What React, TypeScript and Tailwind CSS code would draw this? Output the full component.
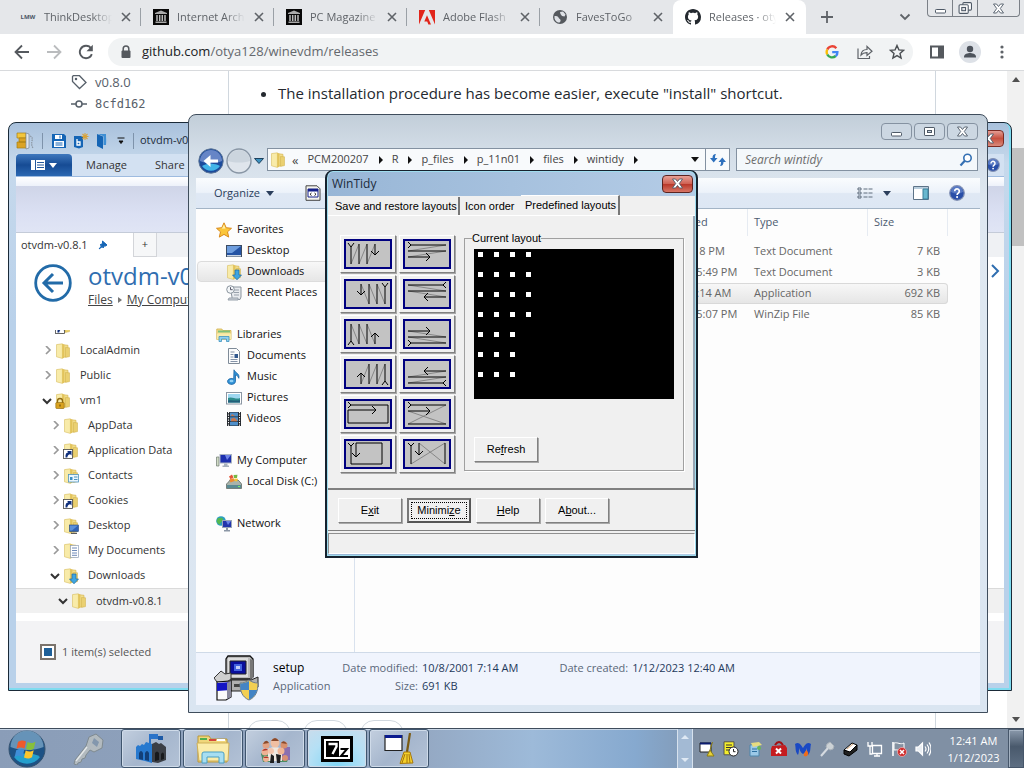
import type { ReactNode } from 'react';

type IconProps = { className?: string };

/* ---------- shared icons ---------- */

function Folder({ className = 'size-4', children }: IconProps & { children?: ReactNode }) {
  return (
    <svg viewBox="0 0 16 16" className={`${className} shrink-0`}>
      <path d="M7 1.500l6 .8v11l-6 1.200z" fill="#f0dc8a" stroke="#d3b24c" strokeWidth=".6" />
      <path d="M10.500 4.500l4 .3v8.800l-4 .8z" fill="#ead071" stroke="#cfae47" strokeWidth=".5" />
      <path d="M1.500 1.600L7.400.8v14.600l-5.900-1.600z" fill="#f8eba9" stroke="#d9bd5f" strokeWidth=".6" />
      <path d="M7.400.8l2 1v13l-2 .6z" fill="#e3c45a" />
      {children}
    </svg>
  );
}

const ShortcutBadge = () => (
  <g>
    <rect x=".5" y="6.500" width="9" height="9" fill="#fff" stroke="#444" strokeWidth=".8" />
    <path d="M2.500 14.500c-.3-3.500 1-5 2.800-5.200L4 8h4.500v4.500L7.200 11.200C5.500 11.400 4.500 12.300 4.300 14.500z" fill="#0f2f7c" />
  </g>
);
const DownBadge = () => <path d="M9 6h4v5h2.500L11 15.800 6.500 11H9z" fill="#3fa5e0" stroke="#1b6ba5" strokeWidth=".7" />;
const LockBadge = () => (
  <g>
    <path d="M2.500 10V8a2.500 2.500 0 015 0v2" fill="none" stroke="#8f6a10" strokeWidth="1.300" />
    <rect x=".8" y="9.500" width="8.400" height="6" rx=".8" fill="#d9a21f" stroke="#8f6a10" strokeWidth=".6" />
    <path d="M5 11.500v2" stroke="#5a4208" />
  </g>
);
const CardBadge = () => (
  <g>
    <rect x="5.500" y="6.500" width="10" height="7.500" fill="#eaf6fd" stroke="#4f94bd" strokeWidth=".8" />
    <path d="M7 9h2.500v3H7z" fill="#3c8ec4" />
    <path d="M11 9h3.500M11 11.500h3.500" stroke="#4f94bd" />
  </g>
);
const ScreenBadge = () => (
  <g>
    <rect x="6.500" y="7" width="9" height="6.500" fill="#2f62b5" stroke="#26487c" strokeWidth=".6" />
    <path d="M7 7.500h8l-6 5H7z" fill="#5b8fd8" />
    <path d="M8 15.300h6" stroke="#333" />
  </g>
);
const PageBadge = () => (
  <g>
    <rect x="7.500" y="2.500" width="8" height="12" fill="#fff" stroke="#8fa0b8" strokeWidth=".7" />
    <path d="M9 5h5M9 7.500h5M9 10h5M9 12.300h5" stroke="#5d7db0" strokeWidth=".9" />
  </g>
);

function CrossIcon({ className = 'size-2.5' }: IconProps) {
  return (
    <svg viewBox="0 0 10 10" className={`${className} shrink-0`}>
      <path d="M1 1l8 8M9 1L1 9" stroke="currentColor" strokeWidth="1.600" />
    </svg>
  );
}

/* outlined white caption glyph, as on Aero windows */
function CaptionGlyph({ kind, className = 'h-[11px] w-[13px]' }: IconProps & { kind: 'min' | 'max' | 'restore' | 'close' }) {
  return (
    <svg viewBox="0 0 13 11" className={className} fill="#fff" stroke="#4e5966" strokeWidth="1">
      {kind === 'min' && <rect x="1.500" y="6.500" width="10" height="3.500" rx=".8" />}
      {kind === 'max' && (
        <g>
          <rect x="1.500" y="1.500" width="10" height="8" rx=".6" />
          <rect x="4.500" y="4.500" width="4" height="2" fill="#c8d4e0" />
        </g>
      )}
      {kind === 'restore' && (
        <g>
          <rect x="4.500" y=".5" width="8" height="7" rx="1" />
          <rect x="1" y="2.500" width="8.500" height="8" rx="1" />
          <rect x="3.500" y="5" width="3.500" height="3" fill="#dee1e6" />
        </g>
      )}
      {kind === 'close' && (
        <path d="M1.500 1h3l2 2.500L8.500 1h3L8.300 5.500l3.200 4.500h-3L6.500 7.500l-2 2.500h-3l3.200-4.500z" strokeWidth=".9" />
      )}
    </svg>
  );
}

function HelpBadge({ className = 'size-4' }: IconProps) {
  return (
    <svg viewBox="0 0 16 16" className={className}>
      <circle cx="8" cy="8" r="7.300" fill="#2a4fa8" stroke="#8593b5" strokeWidth="1.200" />
      <path d="M2 7a6 6 0 0112 0c-4 2-8 2-12 0z" fill="#7795d6" opacity=".6" />
      <path d="M5.700 6.200a2.300 2.300 0 114 1.500C8.600 8.500 8.100 8.800 8.100 9.900" fill="none" stroke="#fff" strokeWidth="1.700" />
      <circle cx="8.100" cy="12.100" r="1.050" fill="#fff" />
    </svg>
  );
}

/* ---------- browser ---------- */

const ArchiveIcon = () => (
  <svg viewBox="0 0 16 16" className="size-4 shrink-0">
    <path d="M0 0h16v16H0z" fill="#080808" />
    <path d="M2 4l6-2.500L14 4v1H2zM2.500 12.500h11V14h-11z" fill="#aaa" />
    <path d="M4 6v6M6.700 6v6M9.300 6v6M12 6v6" stroke="#bbb" strokeWidth="1.500" />
  </svg>
);

const tabs: { title: string; icon: ReactNode; active?: boolean }[] = [
  {
    title: 'ThinkDesktop',
    icon: <span className="w-4 shrink-0 text-center font-['Open_Sans',sans-serif] text-[6px] font-bold text-gray-600">LMW</span>,
  },
  { title: 'Internet Archive', icon: <ArchiveIcon /> },
  { title: 'PC Magazine', icon: <ArchiveIcon /> },
  {
    title: 'Adobe Flash',
    icon: (
      <svg viewBox="0 0 16 16" className="size-4 shrink-0" fill="#e1251b">
        <path d="M0 1h6.200L0 15.500zM9.800 1H16v14.500zM8 6.300l4 9.200H9.400l-1.200-3H5.300z" />
      </svg>
    ),
  },
  {
    title: 'FavesToGo',
    icon: (
      <svg viewBox="0 0 16 16" className="size-4 shrink-0">
        <circle cx="8" cy="8" r="7" fill="#55595e" />
        <path d="M2.500 7c2 .2 3.500 0 4 1.500S9 10 8.500 12 7 13.500 6 13.500C3.500 12.500 2 10 2.500 7zM8 3l3-.5 2.500 3-1 2-2.500-.5L8.500 5z" fill="#dee1e6" />
      </svg>
    ),
  },
  {
    title: 'Releases · otya',
    active: true,
    icon: (
      <svg viewBox="0 0 16 16" className="size-4 shrink-0" fill="#24292f">
        <path d="M8 0C3.580 0 0 3.580 0 8c0 3.540 2.290 6.530 5.470 7.590.4.070.55-.17.55-.38 0-.19-.01-.82-.01-1.490-2.010.37-2.530-.49-2.690-.94-.09-.23-.48-.94-.82-1.130-.28-.15-.68-.52-.01-.53.63-.01 1.080.58 1.230.82.72 1.210 1.870.87 2.330.66.07-.52.28-.87.51-1.070-1.780-.2-3.640-.89-3.640-3.950 0-.87.31-1.590.82-2.150-.08-.2-.36-1.020.08-2.120 0 0 .67-.21 2.200.82.64-.18 1.320-.27 2-.27s1.360.09 2 .27c1.530-1.040 2.200-.82 2.200-.82.44 1.100.16 1.920.08 2.120.51.56.82 1.270.82 2.150 0 3.070-1.870 3.750-3.650 3.950.29.25.54.73.54 1.480 0 1.070-.01 1.930-.01 2.200 0 .21.15.46.55.38A8.010 8.010 0 0016 8c0-4.420-3.580-8-8-8z" />
      </svg>
    ),
  },
];

function TabStrip() {
  return (
    <div className="flex h-[34px] shrink-0 items-stretch bg-[#e5e7ea] pl-2 font-['Open_Sans',sans-serif] text-[#5f6368]">
      {tabs.map((tab, i) => (
        <div
          key={tab.title}
          className={`flex w-[133px] items-center gap-2 pl-3 ${tab.active ? 'rounded-t-lg bg-white pr-2.5' : 'pr-[9px]'} ${
            !tab.active && i < 4 ? 'bg-[linear-gradient(#9aa0a6,#9aa0a6)] bg-[length:1px_18px] bg-[position:right_center] bg-no-repeat' : ''
          }`}
        >
          {tab.icon}
          <span className="min-w-0 flex-1 overflow-hidden text-[11px] whitespace-nowrap [mask-image:linear-gradient(to_right,#000_70%,transparent)]">
            {tab.title}
          </span>
          <button aria-label="Close tab" className="flex size-3 items-center justify-center">
            <CrossIcon />
          </button>
        </div>
      ))}
      <button aria-label="New tab" className="ml-[13px] flex w-4 items-center justify-center">
        <svg viewBox="0 0 14 14" className="size-3.5">
          <path d="M7 1v12M1 7h12" stroke="currentColor" strokeWidth="1.800" />
        </svg>
      </button>
      <div className="flex-1" />
      <button aria-label="Search tabs" className="mr-3.5 flex w-4 items-center justify-center">
        <svg viewBox="0 0 12 8" className="h-2 w-3">
          <path d="M1.500 1.500L6 6l4.500-4.500" fill="none" stroke="currentColor" strokeWidth="1.800" />
        </svg>
      </button>
      <div className="mr-1 flex h-[17px] w-[93px] rounded-b border border-t-0 border-[#7b8087]">
        <button aria-label="Minimize" className="flex w-[25px] items-center justify-center border-r border-[#7b8087]">
          <CaptionGlyph kind="min" />
        </button>
        <button aria-label="Restore" className="flex w-[25px] items-center justify-center border-r border-[#7b8087]">
          <CaptionGlyph kind="restore" className="h-3 w-3.5" />
        </button>
        <button aria-label="Close" className="flex flex-1 items-center justify-center">
          <CaptionGlyph kind="close" />
        </button>
      </div>
    </div>
  );
}

function Omnibar() {
  return (
    <div className="flex h-9 shrink-0 items-center bg-white pr-3.5 pl-3.5 text-[#5f6368]">
      <button aria-label="Back" className="size-4">
        <svg viewBox="0 0 16 16" fill="none" stroke="#55595e" strokeWidth="1.800">
          <path d="M15 8H2M8 1.500L1.500 8 8 14.500" />
        </svg>
      </button>
      <button aria-label="Forward" className="ml-4 size-4">
        <svg viewBox="0 0 16 16" fill="none" stroke="#babcbe" strokeWidth="1.800">
          <path d="M1 8h13M8 1.500L14.500 8 8 14.500" />
        </svg>
      </button>
      <button aria-label="Reload" className="ml-4 size-4">
        <svg viewBox="0 0 16 16" fill="none" stroke="#55595e" strokeWidth="1.900">
          <path d="M13.300 4.700A6.200 6.200 0 108 14.200a6.200 6.200 0 005.800-4" />
          <path d="M14.800.8v6.400H8.500z" fill="#55595e" stroke="none" />
        </svg>
      </button>
      <div className="ml-3.5 flex h-7 flex-1 items-center rounded-full bg-[#f1f3f4] pr-2 pl-3">
        <svg viewBox="0 0 12 14" className="h-3.5 w-3">
          <path d="M3.200 6V3.800a2.800 2.800 0 015.600 0V6" fill="none" stroke="#55595e" strokeWidth="1.500" />
          <rect x="1.500" y="5.500" width="9" height="7.500" rx="1" fill="#55595e" />
        </svg>
        <span className="ml-2.5 flex-1 font-['Open_Sans',sans-serif] text-[13px] text-[#64686d]">
          <span className="text-[#202124]">github.com</span>/otya128/winevdm/releases
        </span>
        <button aria-label="Google" className="size-3.5">
          <svg viewBox="0 0 14 14" fill="none" strokeWidth="2.400">
            <path d="M11.300 3.200A5.400 5.400 0 002.300 4.500" stroke="#ea4335" />
            <path d="M2.300 4.500a5.400 5.400 0 000 5" stroke="#fbbc05" />
            <path d="M2.300 9.500A5.400 5.400 0 0010.700 11" stroke="#34a853" />
            <path d="M10.700 11.100C12 10 12.500 8.800 12.400 7.100H7.200" stroke="#4285f4" />
          </svg>
        </button>
        <button aria-label="Share" className="ml-[18px] size-4">
          <svg viewBox="0 0 16 16" fill="none" stroke="#5f6368" strokeWidth="1.200">
            <path d="M1 4.500v10h11.500V12M4 11c.3-3.500 2.500-5.500 6-5.500V2.500l5 4.700-5 4.300V8.600C7.500 8.500 5.500 9.200 4 11z" />
          </svg>
        </button>
        <button aria-label="Bookmark" className="ml-4 size-4">
          <svg viewBox="0 0 16 16" fill="none" stroke="#4a4e52" strokeWidth="1.400">
            <path d="M8 1.500l1.900 4.400 4.700.4-3.600 3.100 1.100 4.700L8 11.600l-4.100 2.500L5 9.400 1.400 6.300l4.700-.4z" />
          </svg>
        </button>
      </div>
      <button aria-label="Side panel" className="ml-4 size-4">
        <svg viewBox="0 0 16 16">
          <path d="M1 1.500h14v13H1zM3 3.500v9h6v-9z" fill="#55595e" fillRule="evenodd" />
        </svg>
      </button>
      <button aria-label="Profile" className="ml-3.5 size-[22px]">
        <svg viewBox="0 0 22 22">
          <circle cx="11" cy="11" r="11" fill="#dde1e7" />
          <circle cx="11" cy="8" r="3.200" fill="#4d535c" />
          <path d="M5 16.500v-1c0-2.500 4-3.500 6-3.500s6 1 6 3.500v1z" fill="#4d535c" />
        </svg>
      </button>
      <button aria-label="Menu" className="ml-[13px] size-4">
        <svg viewBox="0 0 16 16" fill="#5f6368">
          <circle cx="8" cy="3" r="1.600" />
          <circle cx="8" cy="8" r="1.600" />
          <circle cx="8" cy="13" r="1.600" />
        </svg>
      </button>
    </div>
  );
}

function ReleasePage() {
  return (
    <div className="flex min-h-0 flex-1 border-t border-[#d8dadd] bg-white font-['Open_Sans',sans-serif]">
      <aside className="w-[228px] shrink-0 pl-[71px] text-[13px] leading-[22px] text-[#57606a]">
        <a href="#tag" className="flex items-center gap-2">
          <svg viewBox="0 0 16 16" className="size-4" fill="none" stroke="currentColor" strokeWidth="1.300">
            <path d="M1.500 2.500v5l7 7L15 8.500 8.500 1.700h-6.200z" />
            <circle cx="5" cy="5" r=".6" fill="currentColor" />
          </svg>
          v0.8.0
        </a>
        <a href="#commit" className="flex items-center gap-2 font-['DejaVu_Sans_Mono',monospace] text-[12px]">
          <svg viewBox="0 0 16 16" className="size-4" fill="none" stroke="currentColor" strokeWidth="1.500">
            <circle cx="8" cy="8" r="3" />
            <path d="M0 8h5M11 8h5" />
          </svg>
          8cfd162
        </a>
      </aside>
      <main className="flex min-w-0 flex-1 flex-col justify-between border-x border-[#d0d7de]">
        <ul className="list-disc pt-2.5 pl-[49px] text-[15px] leading-6 text-[#24292f]">
          <li>The installation procedure has become easier, execute "install" shortcut.</li>
        </ul>
        <div className="flex h-2 shrink-0 gap-3 overflow-hidden pl-[18px]">
          <span className="h-7 w-11 rounded-full border border-[#d0d7de]" />
          <span className="h-7 w-[45px] rounded-full border border-[#d0d7de]" />
          <span className="h-7 w-11 rounded-full border border-[#d0d7de]" />
        </div>
      </main>
      <div className="w-[71px] shrink-0" />
      <div className="flex w-[17px] shrink-0 flex-col items-center bg-[#f1f1f1] py-1.5">
        <svg viewBox="0 0 8 5" className="h-[5px] w-2">
          <path d="M0 5l4-5 4 5z" fill="#505050" />
        </svg>
        <div className="mt-[66px] h-[98px] w-full bg-[#c1c1c1]" />
        <div className="flex-1" />
        <svg viewBox="0 0 8 5" className="h-[5px] w-2">
          <path d="M0 0l4 5 4-5z" fill="#505050" />
        </svg>
      </div>
    </div>
  );
}

/* ---------- WinZip window ---------- */

const tree: { name: string; pad: string; open?: boolean; badge?: ReactNode; selected?: boolean }[] = [
  { name: 'Default User', pad: 'pl-[26px]', badge: <ShortcutBadge /> },
  { name: 'LocalAdmin', pad: 'pl-[26px]' },
  { name: 'Public', pad: 'pl-[26px]' },
  { name: 'vm1', pad: 'pl-[26px]', open: true, badge: <LockBadge /> },
  { name: 'AppData', pad: 'pl-[34px]' },
  { name: 'Application Data', pad: 'pl-[34px]', badge: <ShortcutBadge /> },
  { name: 'Contacts', pad: 'pl-[34px]', badge: <CardBadge /> },
  { name: 'Cookies', pad: 'pl-[34px]', badge: <ShortcutBadge /> },
  { name: 'Desktop', pad: 'pl-[34px]', badge: <ScreenBadge /> },
  { name: 'My Documents', pad: 'pl-[34px]', badge: <PageBadge /> },
  { name: 'Downloads', pad: 'pl-[34px]', open: true, badge: <DownBadge /> },
  { name: 'otvdm-v0.8.1', pad: 'pl-[42px]', open: true, selected: true },
];

function WinZipWindow() {
  return (
    <section className="absolute top-[122px] right-3 bottom-[77px] left-2 flex flex-col overflow-hidden rounded-t-lg border border-[#1a2a38] bg-[linear-gradient(#a9c1dc,#c6d9ec_40px,#b9d1ea_200px)] px-[7px] pb-[7px] font-['Open_Sans',sans-serif] text-[11px] text-[#333] shadow-[inset_-1px_-1px_0_1px_#7fdcf0]">
      <div className="flex h-[31px] shrink-0 items-center pt-1">
        <svg viewBox="0 0 18 18" className="size-[18px]">
          <path d="M1 1h9v5H1z" fill="#f3c63c" stroke="#a87e11" strokeWidth=".7" />
          <path d="M3 6h8v4H3zM1 10h10v6H1z" fill="#dba324" stroke="#a87e11" strokeWidth=".7" />
          <path d="M10 1l3 1v14l-3 1z" fill="#dfe5eb" stroke="#7b8794" strokeWidth=".7" />
          <path d="M14 4q3 1 2 5t1 7" fill="none" stroke="#8c98a5" strokeWidth="1.300" strokeDasharray="1.500 .8" />
        </svg>
        <span className="ml-2 h-4 w-px bg-[#7e93ab]" />
        <button aria-label="Save" className="ml-2 size-4">
          <svg viewBox="0 0 16 16">
            <path d="M1 1h12l2 2v12H1z" fill="#1565b5" />
            <path d="M4 2h7v4H4zM3 8h10v6H3z" fill="#fff" />
            <path d="M4.500 10h7M4.500 12h7M9 2.500v3" stroke="#1565b5" />
          </svg>
        </button>
        <button aria-label="New zip" className="ml-1.5 size-4">
          <svg viewBox="0 0 16 16">
            <path d="M1 3h9v11l-4 1.500L1 14z" fill="#1565b5" />
            <path d="M4 6v6h3V9H4" stroke="#fff" strokeWidth="1.300" fill="none" />
            <path d="M12 0v7M8.500 3.500h7M9.500 1l5 5M14.500 1l-5 5" stroke="#d9a33a" strokeWidth="1.100" />
          </svg>
        </button>
        <button aria-label="Open" className="ml-1.5 size-4">
          <svg viewBox="0 0 16 16">
            <path d="M2 1l6 2.500V16l-6-3z" fill="#1565b5" />
            <path d="M3 1h8v11H8.500V3.200z" fill="#3f8fd4" />
            <path d="M11 3.500c1.500 2 1.500 6 0 8z" fill="#9fc4e6" />
          </svg>
        </button>
        <svg viewBox="0 0 8 8" className="ml-1.5 size-2">
          <path d="M.5 1h7M2 4h4L4 6.500z" fill="#111" stroke="#111" strokeWidth="1" />
        </svg>
        <span className="mr-1.5 ml-2 h-4 w-px bg-[#7e93ab]" />
        <h2 className="text-[#1c2b3a]">otvdm-v0.8.1</h2>
        <div className="flex-1" />
        <button aria-label="Close" className="-mt-1 flex h-[17px] w-[42px] items-center justify-end rounded-sm border border-[#7c2a22] bg-[linear-gradient(#e59e94,#c6503f_50%,#d98a7c)] pr-2">
          <CaptionGlyph kind="close" />
        </button>
      </div>
      <nav className="flex h-[22px] shrink-0 items-center bg-[#d3e1f2]">
        <button aria-label="File menu" className="flex h-full w-14 items-center justify-center gap-1 rounded-t-sm bg-[linear-gradient(#3f78bd,#164b94_50%,#2c68b2)]">
          <svg viewBox="0 0 14 12" className="h-3 w-3.5">
            <path d="M0 1h14v10H0z" fill="#fff" />
            <path d="M6 3.500h7M6 6h7M6 8.500h7M4.500 1v10" stroke="#24589c" />
          </svg>
          <svg viewBox="0 0 8 5" className="h-[5px] w-2">
            <path d="M0 0h8L4 5z" fill="#fff" />
          </svg>
        </button>
        <button className="ml-3.5">Manage</button>
        <button className="ml-7">Share</button>
        <div className="flex-1" />
        <HelpBadge className="mr-1 size-3.5" />
      </nav>
      <div className="h-2.5 shrink-0 border-t border-[#9ebbe0] bg-[linear-gradient(#fff,#edf1fa)]" />
      <div className="h-[46px] shrink-0 bg-[linear-gradient(#cfd5e8,#dbe0f3_60%,#e0e5f5)]" />
      <div className="flex h-[25px] shrink-0 items-stretch border-t border-[#c4cbd8] bg-[#eff1f4]">
        <button className="flex w-[117px] items-center gap-2.5 bg-white pl-[5px]">
          otvdm-v0.8.1
          <svg viewBox="0 0 10 10" className="size-2.5">
            <path d="M4.500 1L9 5 7.500 6 6.500 5.800 5 8 4.500 6.500 1 9l2.800-3.500L2 5l2.500-1.500z" fill="#1565b5" stroke="#1565b5" />
          </svg>
        </button>
        <button className="w-6 border border-t-0 border-[#d3d5d9] bg-[#f6f7f8]">+</button>
      </div>
      <header className="flex h-[73px] shrink-0 items-start gap-4 bg-white pt-[7px] pr-3 pl-[18px]">
        <button aria-label="Back" className="size-[38px] shrink-0">
          <svg viewBox="0 0 38 38" fill="none" stroke="#226ba8" strokeWidth="3">
            <circle cx="19" cy="19" r="17.300" strokeWidth="2.800" />
            <path d="M29 19H11M19 10l-9 9 9 9" />
          </svg>
        </button>
        <div className="-mt-0.5 flex-1">
          <h1 className="text-[24px] leading-7 text-[#2f6eb0]">otvdm-v0.8.1</h1>
          <p className="flex items-center gap-[5px] text-[12px] leading-5 whitespace-nowrap text-[#444]">
            <a href="#files" className="underline">Files</a>
            <svg viewBox="0 0 4 6" className="h-1.5 w-1"><path d="M0 0l4 3-4 3z" fill="#777" /></svg>
            <a href="#computer" className="underline">My Computer</a>
          </p>
        </div>
        <svg viewBox="0 0 10 14" className="-mr-2 h-3.5 w-2.5" fill="none" stroke="#2f6eb0" strokeWidth="2">
          <path d="M2 1l6 6-6 6" />
        </svg>
      </header>
      <ul className="flex min-h-0 flex-1 flex-col justify-end overflow-hidden bg-white">
        {tree.map((node) => (
          <li
            key={node.name}
            className={`flex h-[25px] shrink-0 items-center ${node.pad} ${node.selected ? 'border-t border-[#dadada] bg-[#f1f1f1]' : ''}`}
          >
            <svg viewBox="0 0 10 10" className="size-2.5" fill="none">
              {node.open ? (
                <path d="M1 3l4 4 4-4" stroke="#333" strokeWidth="2" />
              ) : (
                <path d="M4 0l4 4-4 4" stroke="#999" strokeWidth="1.700" />
              )}
            </svg>
            <Folder className="ml-[3px] size-4">{node.badge}</Folder>
            <span className="ml-[9px] whitespace-nowrap">{node.name}</span>
          </li>
        ))}
      </ul>
      <footer className="flex h-[70px] shrink-0 items-center border-t-8 border-white bg-[#f3f3f5] pl-6">
        <input
          id="selected"
          type="checkbox"
          defaultChecked
          className="size-4 appearance-none border-2 border-[#7b736c] bg-white checked:bg-[#1f6099] checked:shadow-[inset_0_0_0_2px_#fff]"
        />
        <label htmlFor="selected" className="ml-1.5 text-[#555]">1 item(s) selected</label>
      </footer>
    </section>
  );
}

/* ---------- Explorer window ---------- */

const StarIcon = () => (
  <svg viewBox="0 0 16 16" className="size-4">
    <path d="M8 .8l2.200 4.900 5.300.6-4 3.500 1.200 5.300L8 12.400l-4.700 2.700 1.200-5.300-4-3.500 5.300-.6z" fill="#fbc63a" stroke="#d98a1d" />
    <path d="M8 2.500l1.500 4-6.500.3 3-.3z" fill="#fff0a8" />
  </svg>
);
const DesktopIcon = () => (
  <svg viewBox="0 0 16 16" className="size-4">
    <rect x=".5" y="2.500" width="15" height="11" fill="#2453a4" stroke="#3c4c63" />
    <path d="M1 3h14l-9 7H1z" fill="#6f9ede" />
    <path d="M1 12h14v1.500H1z" fill="#c8d4e4" />
  </svg>
);
const RecentIcon = () => (
  <svg viewBox="0 0 16 16" className="size-4">
    <path d="M4 2h11v10l-1 2.500H6V12z" fill="#e8ebee" stroke="#8b949e" />
    <path d="M3 13h9v2H2zM8 5h5M8 7.500h5M8 10h5" stroke="#98a1ab" fill="#ccd2d8" />
    <circle cx="4.500" cy="4.500" r="3.800" fill="#f3f6f8" stroke="#8b949e" />
    <path d="M4.500 2.200v2.500H6.700" stroke="#556" fill="none" />
  </svg>
);
const LibrariesIcon = () => (
  <svg viewBox="0 0 16 16" className="size-4">
    <path d="M.8 2h5l1 1.500H15v9H.8z" fill="#f3df90" stroke="#cfae47" strokeWidth=".8" />
    <path d="M2 3.500h12v2H2z" fill="#7ec07a" />
    <path d="M1 6.500h14v6H1z" fill="#f8ebab" />
    <path d="M3 14.500v-5h10v5h-2.500v-2.500h-5v2.500z" fill="#8fd0ef" stroke="#3f93bf" strokeWidth=".8" />
  </svg>
);
const DocumentsIcon = () => (
  <svg viewBox="0 0 16 16" className="size-4">
    <path d="M2.500.5h8l3 3v12h-11z" fill="#fbfcfd" stroke="#7f8b98" />
    <path d="M4.500 4h4M4.500 6.500h3M4.500 9h3M4.500 11.500h7M4.500 13.500h7" stroke="#8493a8" />
    <rect x="8.500" y="6" width="3.500" height="4" fill="#30578d" />
  </svg>
);
const MusicIcon = () => (
  <svg viewBox="0 0 16 16" className="size-4">
    <path d="M8 .8c1 3 6 3.500 4.800 8.500C12 7 10.500 6 9.500 6v6.500a4 3 0 11-1.800-2.600z" fill="#3191d5" stroke="#1c64a3" strokeWidth=".8" />
    <ellipse cx="5.500" cy="12" rx="2" ry="1.300" fill="#8fd0f5" />
  </svg>
);
const PicturesIcon = () => (
  <svg viewBox="0 0 16 16" className="size-4">
    <rect x=".5" y="2.500" width="15" height="11.500" fill="#fff" stroke="#8b96a3" />
    <rect x="2" y="4" width="12" height="8.500" fill="#9ed7f0" />
    <path d="M2 8c4-2 8 2 12 0v4.500H2z" fill="#2d8c8c" />
    <path d="M2 10.500c4-1 8 1 12-.5v2.500H2z" fill="#235f7a" />
  </svg>
);
const VideosIcon = () => (
  <svg viewBox="0 0 16 16" className="size-4">
    <path d="M1 1h14v14H1z" fill="#23272d" />
    <path d="M4 1.500h8v4H4zM4 6.300h8v4H4zM4 11h8v3.500H4z" fill="#4d8ec9" />
    <path d="M5 8l3-1.500 3 2.500v1.300H5zM6 3l3 2H5z" fill="#c4774f" />
    <path d="M2.500 1v14M13.500 1v14" stroke="#fff" strokeWidth="1.100" strokeDasharray="1.300 1.200" />
  </svg>
);
const ComputerIcon = () => (
  <svg viewBox="0 0 16 16" className="size-4">
    <path d="M.5 4h2.500v9H.5z" fill="#d0dac5" stroke="#6e7a70" strokeWidth=".7" />
    <rect x="4" y="1.500" width="11.500" height="8.500" fill="#1c2fae" stroke="#a9b3c1" />
    <path d="M9 2h6L11 7z" fill="#6f85e6" />
    <path d="M8 10.500h3.500v2H13V14H6.500v-1.500H8z" fill="#a7b1bd" />
  </svg>
);
const DiskIcon = () => (
  <svg viewBox="0 0 16 16" className="size-4">
    <path d="M2.500 8l1.500-2h8l2 2 1.500 2v4.500H.5V10z" fill="#a9b3ab" stroke="#5f6a66" strokeWidth=".8" />
    <path d="M1 11h14v3H1z" fill="#5a8b93" />
    <path d="M12 12.500h2" stroke="#7cf06a" />
    <path d="M3 2.500l3-2 1.500 3-3 1.800z" fill="#e5543a" />
    <path d="M7.500 1l4-.2L11 4 8 4z" fill="#76b845" />
    <path d="M3.500 5.500l4-1.500 1 3-4 1.500z" fill="#f08a2e" />
    <path d="M8.500 4.500L12 4.700 11 7.500 8.500 7z" fill="#f5c532" />
  </svg>
);
const NetworkIcon = () => (
  <svg viewBox="0 0 16 16" className="size-4">
    <circle cx="5" cy="5" r="4.800" fill="#2c9ec0" />
    <path d="M2 2c2 0 4-1 5 1S4 6 4 8 1 7 .5 5z" fill="#54b850" />
    <rect x="6.500" y="4.500" width="9" height="7" fill="#2335ad" stroke="#9aa6b8" />
    <path d="M10 5h5l-3 4z" fill="#6a82e4" />
    <path d="M10 12v2H8v1.500h6V14h-2v-2z" fill="#8c97a6" />
  </svg>
);

const navGroups: { title: string; icon: ReactNode; items: { name: string; icon: ReactNode; selected?: boolean }[] }[] = [
  {
    title: 'Favorites',
    icon: <StarIcon />,
    items: [
      { name: 'Desktop', icon: <DesktopIcon /> },
      { name: 'Downloads', icon: <Folder><DownBadge /></Folder>, selected: true },
      { name: 'Recent Places', icon: <RecentIcon /> },
    ],
  },
  {
    title: 'Libraries',
    icon: <LibrariesIcon />,
    items: [
      { name: 'Documents', icon: <DocumentsIcon /> },
      { name: 'Music', icon: <MusicIcon /> },
      { name: 'Pictures', icon: <PicturesIcon /> },
      { name: 'Videos', icon: <VideosIcon /> },
    ],
  },
  { title: 'My Computer', icon: <ComputerIcon />, items: [{ name: 'Local Disk (C:)', icon: <DiskIcon /> }] },
  { title: 'Network', icon: <NetworkIcon />, items: [] },
];

const crumbs = ['PCM200207', 'R', 'p_files', 'p_11n01', 'files', 'wintidy'];

const files = [
  { date: '6/9/2002 3:18 PM', type: 'Text Document', size: '7 KB' },
  { date: '12/11/2022 5:49 PM', type: 'Text Document', size: '3 KB' },
  { date: '10/8/2001 7:14 AM', type: 'Application', size: '692 KB', selected: true },
  { date: '12/11/2022 5:07 PM', type: 'WinZip File', size: '85 KB' },
];

const aeroButton = 'flex h-[17px] items-center justify-center rounded-sm border border-[#8592a1] bg-[#ccd7e2]';

function SetupIcon() {
  return (
    <svg viewBox="0 0 45 46" className="h-[46px] w-[45px] shrink-0">
      <path d="M14 1h22l3 3v18l-3 2H12V4z" fill="#b9b9b9" stroke="#111" strokeWidth="1.300" />
      <path d="M14 3h20v19H14z" fill="#dcdcdc" />
      <path d="M16 6h16v13H16z" fill="#0a0f9c" stroke="#222" />
      <path d="M20 9h8v7h-8z" fill="#4363e0" />
      <path d="M22 11h4v3h-4z" fill="#c4d0f8" />
      <path d="M36 4l3 1v18l-3 1z" fill="#777" />
      <path d="M17 25h20l7-3v10l-6 4H17z" fill="#b0b0b0" stroke="#222" />
      <path d="M20 29h10v3H20z" fill="#444" />
      <path d="M3 20l4-4 4 3 6-1v6l-4 3H3l-3-4z" fill="#cfcfcf" stroke="#333" />
      <path d="M3 27l14-1v16l-5 3H3z" fill="#fafafa" stroke="#111" strokeWidth="1.200" />
      <path d="M3 28l14-1v8l-14 1z" fill="#1414c4" />
      <path d="M13 28l4-2v16l-4 2z" fill="#8a8a9c" />
      <path d="M35 25c3 2 5 3 9 3 0 8-2 14-9 17-7-3-9-9-9-17 4 0 6-1 9-3z" fill="#f3cf53" stroke="#6d7c8e" />
      <path d="M35 26v9h-8.300c-.4-2-.5-4-.5-6.500 4 0 6-1 8.800-2.500zM35 35h8.200C42 39 39.500 43 35 44.600z" fill="#4384c4" />
    </svg>
  );
}

function ExplorerWindow() {
  return (
    <section className="absolute top-[114px] right-9 bottom-[55px] left-[188px] flex flex-col overflow-hidden rounded-t-lg border border-[#3f4d5c] bg-[linear-gradient(#c2ced9,#d5dfe9_40px,#dfe8f1_90px,#dae5f1)] px-[7px] pb-[7px] font-['Open_Sans',sans-serif] text-[11px] text-[#111]">
      <div className="flex h-[33px] shrink-0 justify-end gap-0.5 pt-2 pr-0.5">
        <button aria-label="Minimize" className={`${aeroButton} w-[31px]`}><CaptionGlyph kind="min" /></button>
        <button aria-label="Maximize" className={`${aeroButton} w-[31px]`}><CaptionGlyph kind="max" /></button>
        <button aria-label="Close" className={`${aeroButton} w-[31px]`}><CaptionGlyph kind="close" /></button>
      </div>
      <div className="flex h-[30px] shrink-0 items-start">
        <button aria-label="Back" className="ml-0.5 size-[26px] shrink-0">
          <svg viewBox="0 0 26 26">
            <circle cx="13" cy="13" r="12.200" fill="#1c4b9c" stroke="#5d7596" />
            <path d="M2 13a11 11 0 0122 0c-7 3-15 3-22 0z" fill="#6685c6" />
            <path d="M4 18a11 11 0 0018 0c-5-3-13-3-18 0z" fill="#43b4e8" />
            <path d="M20 11.500h-7.500V7L5.500 13l7 6v-4.500H20z" fill="#fff" />
          </svg>
        </button>
        <button aria-label="Forward" className="ml-0.5 size-[26px] shrink-0">
          <svg viewBox="0 0 26 26">
            <circle cx="13" cy="13" r="12" fill="#dfe5ec" stroke="#8996a5" strokeWidth="1.400" />
            <path d="M2 13a11 11 0 0122 0c-7 2-15 2-22 0z" fill="#ccd5de" />
          </svg>
        </button>
        <svg viewBox="0 0 10 6" className="mt-2.5 ml-0.5 h-1.5 w-2.5 shrink-0">
          <path d="M.5.5h9L5 5.500z" fill="#3b91bf" stroke="#1f425f" />
        </svg>
        <div className="ml-[3px] flex h-[23px] min-w-0 flex-1 items-center border border-[#8391a1] bg-[#f8fafc] text-[#444]">
          <Folder className="ml-0.5 size-4" />
          <span className="ml-1.5 text-[13px] leading-4">«</span>
          {crumbs.map((crumb) => (
            <button key={crumb} className="ml-[9px] flex items-center gap-2.5 whitespace-nowrap">
              {crumb}
              <svg viewBox="0 0 4 8" className="h-2 w-1"><path d="M0 0l4 4-4 4z" fill="#111" /></svg>
            </button>
          ))}
          <div className="flex-1" />
          <svg viewBox="0 0 8 5" className="mr-1.5 h-[5px] w-2"><path d="M0 0h8L4 5z" fill="#111" /></svg>
          <button aria-label="Refresh" className="flex h-full w-6 items-center justify-center border-l border-[#8391a1]">
            <svg viewBox="0 0 16 14" className="h-3.5 w-4" fill="#2e70bd">
              <path d="M6 1C3.500 1 2.500 2.500 2.500 5H0l3.700 4.500L7.500 5H5C5 3.500 5.200 2.500 6 1zM10 13c2.500 0 3.500-1.500 3.500-4H16l-3.700-4.500L8.500 9H11c0 1.500-.2 2.500-1 4z" />
            </svg>
          </button>
        </div>
        <div className="mr-0.5 ml-1.5 flex h-[23px] w-[242px] items-center border border-[#8391a1] bg-[#f4f8fb] pr-1 pl-2">
          <input
            type="text"
            aria-label="Search wintidy"
            placeholder="Search wintidy"
            className="min-w-0 flex-1 bg-transparent text-[12px] italic outline-none placeholder:text-[#6d6d6d]"
          />
          <svg viewBox="0 0 14 14" className="size-3.5" fill="none" stroke="#3470b3">
            <circle cx="8.500" cy="5" r="3.700" strokeWidth="1.600" fill="#fff" />
            <path d="M5.800 7.800L1.500 12.500" strokeWidth="2.200" />
          </svg>
        </div>
      </div>
      <div className="flex h-[31px] shrink-0 items-center border-b border-[#a3b4c6] bg-[linear-gradient(#fafcfe,#ecf2fa_48%,#dfe8f4_52%,#dde7f4)] pr-[15px] pl-[18px] text-[#2b3f5c]">
        <button className="flex items-center gap-1.5">
          Organize
          <svg viewBox="0 0 8 5" className="h-[5px] w-2"><path d="M0 0h8L4 5z" fill="#2b3f5c" /></svg>
        </button>
        <svg viewBox="0 0 16 16" className="ml-[31px] size-4">
          <path d="M1 .8h11l3 3v11.500H1z" fill="#f4f4ee" stroke="#444" />
          <path d="M3 4h10v8H3z" fill="#fff" stroke="#15208a" />
          <path d="M3 4h10v2.500H3z" fill="#15208a" />
          <path d="M6.500 8L5 9.300l1.500 1.200M9.500 8L11 9.300l-1.500 1.200" fill="none" stroke="#222" />
        </svg>
        <div className="flex-1" />
        <button aria-label="Change view" className="flex items-center gap-2.5">
          <svg viewBox="0 0 16 12" className="h-3 w-4" fill="none" stroke="#5f6d7c">
            <path d="M1 1h3v2H1zM1 5h3v2H1zM1 9h3v2H1z" />
            <path d="M6.500 2h9M6.500 6h9M6.500 10h9" strokeDasharray="4 1" />
          </svg>
          <svg viewBox="0 0 8 5" className="h-[5px] w-2"><path d="M0 0h8L4 5z" fill="#2b3f5c" /></svg>
        </button>
        <button aria-label="Preview pane" className="ml-[22px] h-3.5 w-4">
          <svg viewBox="0 0 16 14">
            <path d="M.5.500h15v13H.5z" fill="#fff" stroke="#5d7388" />
            <path d="M1 1h14v2H1z" fill="#b8cddd" />
            <path d="M10 3h5v10h-5z" fill="#69b8cf" stroke="#3b7f9a" />
          </svg>
        </button>
        <button aria-label="Help" className="ml-5 size-4"><HelpBadge /></button>
      </div>
      <div className="flex min-h-0 flex-1 bg-[#fdfdfd]">
        <nav className="w-[159px] shrink-0 border-r border-[#d9e2ee] pt-2.5">
          {navGroups.map((group) => (
            <div key={group.title} className="mb-[21px]">
              <a href="#group" className="flex h-[21px] items-center gap-[5px] pl-5 whitespace-nowrap">
                {group.icon}
                {group.title}
              </a>
              {group.items.map((item) => (
                <a
                  key={item.name}
                  href="#item"
                  className={`flex h-[21px] items-center gap-[5px] whitespace-nowrap ${
                    item.selected ? 'mx-px rounded-sm border border-[#dcdcdc] bg-[linear-gradient(#f8f8f8,#e6e6e6)] pl-7' : 'pl-[30px]'
                  }`}
                >
                  {item.icon}
                  {item.name}
                </a>
              ))}
            </div>
          ))}
        </nav>
        <div className="min-w-0 flex-1 pr-8">
          <table className="w-full table-fixed border-separate border-spacing-0 text-left whitespace-nowrap text-[#666]">
            <thead className="text-[#4c5b70]">
              <tr className="h-[27px] align-middle">
                <th className="font-normal" />
                <th className="w-[121px] border-r border-[#e6ebf2] pl-2 font-normal">Date modified</th>
                <th className="w-[120px] border-r border-[#e6ebf2] pl-1.5 font-normal">Type</th>
                <th className="w-[80px] border-r border-[#e6ebf2] pl-1.5 font-normal">Size</th>
              </tr>
            </thead>
            <tbody>
              <tr className="h-[5px]" />
              {files.map((file) => (
                <tr key={file.date} className={`h-[21px] ${file.selected ? 'bg-[linear-gradient(#f8f8f8,#e5e5e5)] *:border-y *:border-[#d9d9d9]' : ''}`}>
                  <td />
                  <td className="pl-2">{file.date}</td>
                  <td className="pl-1.5">{file.type}</td>
                  <td className={`text-right ${file.selected ? 'rounded-r-sm border-r pr-[7px]' : 'pr-2'}`}>{file.size}</td>
                </tr>
              ))}
            </tbody>
          </table>
        </div>
      </div>
      <footer className="flex h-[53px] shrink-0 items-start border-t border-[#cfdae8] bg-[#f0f4fd] pt-0.5 pl-[18px] leading-[18px] whitespace-nowrap">
        <SetupIcon />
        <div className="ml-3.5 w-[67px] pt-1">
          <p className="text-[12px] text-black">setup</p>
          <p className="text-[#5a6779]">Application</p>
        </div>
        <dl className="grid grid-cols-[78px_auto] gap-x-1 pt-1 text-[#1e395b]">
          <dt className="text-right text-[#5a6779]">Date modified:</dt>
          <dd>10/8/2001 7:14 AM</dd>
          <dt className="text-right text-[#5a6779]">Size:</dt>
          <dd>691 KB</dd>
        </dl>
        <dl className="ml-[41px] flex gap-1 pt-1 text-[#1e395b]">
          <dt className="text-[#5a6779]">Date created:</dt>
          <dd>1/12/2023 12:40 AM</dd>
        </dl>
      </footer>
    </section>
  );
}

/* ---------- WinTidy dialog ---------- */

type Glyph = { dark: string; light: string; flip?: string };

const columns: Omit<Glyph, 'flip'> = {
  dark: 'M4 4l3 4 3-4M7 8v17M15 5v20M23 5v20M31 5v11M27 12l4 4 4-4',
  light: 'M7 25l8-20M15 25l8-20M23 25l8-20',
};
const rows: Omit<Glyph, 'flip'> = {
  dark: 'M5 3l3 3-3 3M8 6h35M5 12h38M5 18h22M23 14l4 4-4 4',
  light: 'M43 6L5 12M43 12L5 18',
};
const flipX = 'translate(48 0) scale(-1 1)';
const flipY = 'translate(0 30) scale(1 -1)';
const flipXY = 'translate(48 30) scale(-1 -1)';

const layouts: (Glyph & { name: string })[] = [
  { name: 'Columns from top left', ...columns },
  { name: 'Rows from top left', ...rows },
  { name: 'Columns from top right', ...columns, flip: flipX },
  { name: 'Rows from top right', ...rows, flip: flipX },
  { name: 'Columns from bottom left', ...columns, flip: flipY },
  { name: 'Rows from bottom left', ...rows, flip: flipY },
  { name: 'Columns from bottom right', ...columns, flip: flipXY },
  { name: 'Rows from bottom right', ...rows, flip: flipXY },
  { name: 'Clockwise', dark: 'M4 3l3 3-3 3M7 6h37v18H4V11h28M28 7l4 4-4 4', light: '' },
  { name: 'Top and bottom', dark: 'M5 3l3 3-3 3M8 6h35M5 25h38M5 12h22M23 8l4 4-4 4', light: 'M43 6L5 25M43 25L5 12' },
  { name: 'Counterclockwise', dark: 'M4 4l3 3 3-3M7 7v18h31V4H12v14M8 14l4 4 4-4', light: '' },
  { name: 'Left and right', dark: 'M5 4l3 3 3-3M8 7v18M42 4v21M16 4v12M12 12l4 4 4-4', light: 'M8 25L42 4M42 25L16 4' },
];

const iconsPerRow = [4, 4, 4, 4, 3, 3, 3];

const raised =
  'border border-t-white border-l-white border-r-[#808080] border-b-[#808080] shadow-[1px_1px_0_#a8a8a8] bg-[#f0f0f0]';

function WinTidyDialog() {
  return (
    <section
      role="dialog"
      aria-label="WinTidy"
      className="absolute top-[170px] left-[325px] flex w-[373px] flex-col overflow-hidden rounded-t-lg border-2 border-t border-[#16222e] bg-[linear-gradient(to_right,#98b6d6,#b4cce6)] font-['Liberation_Sans',Arial,sans-serif] text-[11px] text-black shadow-[inset_0_0_0_1px_#9fdcee]"
    >
      <header className="flex h-[25px] shrink-0 items-center justify-between pr-[3px] pl-[5px]">
        <h2 className="font-['Open_Sans',sans-serif] text-[12px] text-[#1c2b3a]">WinTidy</h2>
        <button aria-label="Close" className="flex h-[18px] w-[31px] items-center justify-center rounded-sm border border-[#5b2420] bg-[linear-gradient(#e8a096,#cf6254_48%,#b9382a_52%,#d87565)]">
          <CaptionGlyph kind="close" />
        </button>
      </header>
      <div className="mx-px mb-0.5 bg-[#f0f0f0]">
        <div role="tablist" className="flex h-5 items-end border-b border-white pl-[3px]">
          <button role="tab" className="h-[18px] w-[129px] border-r-2 border-[#777] pl-1 text-left whitespace-nowrap">Save and restore layouts</button>
          <button role="tab" className="h-[18px] w-[61px] pl-[5px] text-left whitespace-nowrap">Icon order</button>
          <button role="tab" aria-selected="true" className="h-5 w-[99px] border-t border-r-2 border-t-white border-r-[#777] pl-1 text-left whitespace-nowrap">
            Predefined layouts
          </button>
        </div>
        <div className="flex items-start border-r-2 border-[#98a6b4] pt-4 pb-[15px] pl-3">
          <div className="mt-[3px] grid shrink-0 grid-cols-2 gap-x-[3px] gap-y-0.5">
            {layouts.map((layout) => (
              <button key={layout.name} aria-label={layout.name} className={`${raised} flex h-[38px] w-14 items-center justify-center`}>
                <svg viewBox="0 0 48 30" className="h-[30px] w-12" fill="none">
                  <rect x="1" y="1" width="46" height="28" fill="#c3c3c3" stroke="#000080" strokeWidth="2" />
                  <g transform={layout.flip}>
                    <path d={layout.light} stroke="#777" strokeWidth=".8" />
                    <path d={layout.dark} stroke="#000" strokeWidth="1" />
                  </g>
                </svg>
              </button>
            ))}
          </div>
          <fieldset className="ml-[9px] h-[239px] w-[220px] shrink-0 border border-[#a0a0a0] px-[9px] shadow-[1px_1px_0_#fff]">
            <legend className="-ml-0.5 leading-3">Current layout</legend>
            <div className="mt-[5px] flex h-[150px] w-[200px] flex-col gap-[15px] bg-black pt-[3px] pl-1">
              {iconsPerRow.map((count, row) => (
                <div key={row} className="flex gap-[11px]">
                  {Array.from({ length: count }, (_, i) => (
                    <span key={i} className="size-[5px] bg-white" />
                  ))}
                </div>
              ))}
            </div>
            <button className={`${raised} mt-[38px] h-[25px] w-16`}>Re<u>f</u>resh</button>
          </fieldset>
        </div>
        <div className="flex h-[42px] items-center gap-[5px] border-t-2 border-[#808080] pl-2.5">
          <button className={`${raised} h-[25px] w-16`}>E<u>x</u>it</button>
          <button className="h-[25px] w-16 border-2 border-t-[#777] border-r-[#555] border-b-[#555] border-l-[#777] bg-[#f0f0f0] p-0.5">
            <span className="flex h-full items-center justify-center border border-dotted border-black">
              <span>Minimi<u>z</u>e</span>
            </span>
          </button>
          <button className={`${raised} h-[25px] w-16`}><u>H</u>elp</button>
          <button className={`${raised} h-[25px] w-16`}>A<u>b</u>out...</button>
        </div>
        <div className="border-t border-[#808080] pt-0.5">
          <div className="h-[21px] border border-t-[#909090] border-r-white border-b-white border-l-[#909090]" />
        </div>
      </div>
    </section>
  );
}

/* ---------- taskbar ---------- */

const taskIcons: { name: string; active?: boolean; icon: ReactNode }[] = [
  {
    name: 'Building',
    icon: (
      <svg viewBox="0 0 32 32" className="size-8">
        <path d="M14 1h9v5h-7v7h-2z" fill="#2a73c9" />
        <path d="M23 3h5v4h-5z" fill="#1d5aa6" />
        <path d="M1 14l2-2 2 1 2-2 2 1 2-3 6 2v19l-7-2-9-2z" fill="#2779cf" />
        <path d="M17 11l4-2 3 2 2-1 5 4v13l-8 3-6-1z" fill="#3b3f46" />
        <path d="M4 26v-6q2-4 4 0v7M10 27v-7q2-4 4 0v8" fill="#123f78" />
        <path d="M20 28v-8q2-3 4 0v7M26 27v-6q2-3 3 0v5" fill="#17191c" />
      </svg>
    ),
  },
  {
    name: 'Explorer',
    icon: (
      <svg viewBox="0 0 34 32" className="h-8 w-[34px]">
        <path d="M2 3h11l2 3h16v23H2z" fill="#f0d67b" stroke="#b9973a" />
        <path d="M4 5h7v2H4z" fill="#4fae50" />
        <path d="M13 6h7v2h-7z" fill="#d5473b" />
        <path d="M21 6h8v2h-8z" fill="#fff" />
        <path d="M1 10h32l-1 18H3z" fill="#fbecaa" stroke="#cfb059" />
        <path d="M6 30v-9q0-2 2-2h18q2 0 2 2v9h-5v-6H11v6z" fill="#a7def2" stroke="#4b9fc4" />
      </svg>
    ),
  },
  {
    name: 'People',
    icon: (
      <svg viewBox="0 0 32 32" className="size-8">
        <path d="M2 21q4-6 9-3l1 11H4zM20 18q6-2 11 3l-3 8h-8z" fill="#4a8c62" />
        <path d="M22 14h9v13h-9z" fill="#8a6fb0" />
        <path d="M9 16q7-4 14 0v12H9z" fill="#efe8e0" />
        <path d="M12 21l3 2v7h-4zM17 21l5 1-1 8h-3z" fill="#1f1f1f" />
        <circle cx="7" cy="12" r="3.500" fill="#e2a283" />
        <circle cx="16" cy="10" r="4.500" fill="#f0bfa2" />
        <circle cx="25" cy="12" r="3.500" fill="#d8916c" />
        <path d="M4 11q3-6 6-1zM12 8q4-6 8 0zM22 10q3-4 6 1z" fill="#8a4a2b" />
        <circle cx="6" cy="19" r="3.500" fill="#eeb294" />
        <circle cx="12" cy="18" r="3" fill="#f3c5ac" />
        <circle cx="22" cy="18" r="3.500" fill="#f0b595" />
        <circle cx="7" cy="26" r="3" fill="#eeb294" />
        <circle cx="26" cy="25" r="3" fill="#d98f74" />
        <path d="M3 18q3-4 6-1zM4 25q3-3 6 0z" fill="#b43327" />
      </svg>
    ),
  },
  {
    name: '7-Zip',
    active: true,
    icon: (
      <svg viewBox="0 0 32 26" className="h-[26px] w-8">
        <path d="M1.500 1.500h29v23h-29z" fill="#fff" stroke="#000" strokeWidth="3" />
        <path d="M5 5h13v16H5z" fill="#000" />
        <path d="M7.500 8h8v2.500L11.500 18" fill="none" stroke="#fff" strokeWidth="2.400" />
        <path d="M19.500 13h6.500l-6 7h7" fill="none" stroke="#000" strokeWidth="2" />
      </svg>
    ),
  },
  {
    name: 'WinTidy',
    icon: (
      <svg viewBox="0 0 32 32" className="size-8">
        <path d="M2 2.500h17v15H2z" fill="#fff" stroke="#222" strokeWidth="1.200" />
        <path d="M2 2h17v3H2z" fill="#0b1c8f" />
        <path d="M27 0l-3 19" stroke="#7a5b14" strokeWidth="2.200" />
        <path d="M21 19h6l3 11-13 .5z" fill="#f5d12b" stroke="#a5760c" />
        <path d="M22 21l-3 9M24 21v9M26 21l1 9" stroke="#a5760c" />
      </svg>
    ),
  },
];

const trayIcons: { name: string; icon: ReactNode }[] = [
  {
    name: 'WinTidy',
    icon: (
      <g>
        <path d="M1 2h11v9H1z" fill="#fff" stroke="#222" />
        <path d="M1 1.500h11v2H1z" fill="#0b1c6f" />
        <path d="M13.500 1L11 9l4 6H8l3-6" fill="#e9d33a" stroke="#8b7d15" />
      </g>
    ),
  },
  {
    name: 'Notes',
    icon: (
      <g>
        <path d="M1 .8h10v13H1z" fill="#f5ee2b" stroke="#555" />
        <path d="M3 4h6M3 6.500h6M3 9h3" stroke="#333" />
        <circle cx="10.500" cy="10.500" r="4.500" fill="#fff" stroke="#222" />
        <path d="M10.500 8v2.700h2" stroke="#222" fill="none" />
      </g>
    ),
  },
  {
    name: 'Settings',
    icon: (
      <g>
        <path d="M3 4l9-1v12H3z" fill="#9cc9e8" stroke="#4d86ad" />
        <path d="M4 2l8-1 3 3-9 2z" fill="#e7dc80" />
        <path d="M5 8h5M5 10.500h5" stroke="#2b6fa1" />
        <circle cx="12" cy="7" r="2" fill="#67b558" />
      </g>
    ),
  },
  {
    name: 'Toolbox',
    icon: (
      <g>
        <path d="M4 4q4-6 8 0" fill="none" stroke="#a30f12" strokeWidth="2" />
        <path d="M1 5l13-1 2 3v8H0V8z" fill="#c51c1f" />
        <path d="M5 7.500l5 5M10 7.500l-5 5" stroke="#fff" strokeWidth="2" />
      </g>
    ),
  },
  {
    name: 'Malwarebytes',
    icon: (
      <g>
        <path d="M0 3c4-3 6 1 8 4 2-3 4-7 8-4-1 4 0 8-3 11-1-2-1-5-1-7-1 3-2 5-4 6-2-1-3-3-4-6 0 2 0 5-1 7C0 11 1 7 0 3z" fill="#1a49c4" />
        <path d="M9 15c-1-3 2-4 2-6 3 2 3 5 0 6.500z" fill="#ef6c1a" />
      </g>
    ),
  },
  {
    name: 'Key',
    icon: (
      <g>
        <path d="M8 3l3-2 4 4-1 3-3 1-4-3z" fill="#ccd2d6" stroke="#aab2ba" />
        <path d="M9 7l-7 8" stroke="#d5dae0" strokeWidth="2" />
      </g>
    ),
  },
  {
    name: 'Drive',
    icon: (
      <g stroke="#000">
        <path d="M1 9l8-7 5 2-7 8z" fill="#fff" />
        <path d="M14 4v5l-8 6-5-2V9l6 2z" fill="#222" />
        <path d="M4 8l6-5" stroke="#d9a87a" />
      </g>
    ),
  },
  {
    name: 'Network',
    icon: (
      <g fill="none" stroke="#fff" strokeWidth="1.300">
        <path d="M5.500 4.500h9v8h-9zM7 15h6M10 12.500V15M1 1v4h4V1M3 5v8h2.500" />
      </g>
    ),
  },
  {
    name: 'Action Center',
    icon: (
      <g>
        <path d="M2 1v14" stroke="#fff" strokeWidth="1.600" />
        <path d="M3 2c4-1 6 2 10 0v7c-4 2-6-1-10 0z" fill="#8592a2" stroke="#fff" />
        <circle cx="11" cy="11" r="4.500" fill="#cf2b2b" stroke="#f2baba" strokeWidth=".7" />
        <path d="M9 9l4 4M13 9l-4 4" stroke="#fff" strokeWidth="1.500" />
      </g>
    ),
  },
  {
    name: 'Volume',
    icon: (
      <g fill="none" stroke="#fff" strokeWidth="1.200">
        <path d="M1 6h2.500L7.500 2v12L3.500 10H1z" fill="#e8edf2" />
        <path d="M10 5.500q2 2.500 0 5M12 3.500q3.500 4.500 0 9M14 1.500q4 6 0 13" />
      </g>
    ),
  },
];

function Taskbar() {
  return (
    <footer className="flex h-10 shrink-0 items-stretch border-t border-[#3f4c5c] bg-[linear-gradient(to_right,#8a9db8,#93a6c0_40%,#9dbad9_52%,#86a9cf_62%,#8299b4_68%)] shadow-[inset_0_1px_0_#c8d6e6]">
      <button aria-label="Start" className="ml-2 w-[38px]">
        <svg viewBox="0 0 38 38">
          <circle cx="19" cy="19" r="18" fill="#1d5285" stroke="#33516e" />
          <path d="M2.500 17a16.500 16.500 0 0133 0c-9 4-24 4-33 0z" fill="#7fa9ca" opacity=".75" />
          <path d="M6 27a16 16 0 0026 0c-7-5-19-5-26 0z" fill="#27b3df" opacity=".8" />
          <path d="M10 12c3-2 5-2 8-.5l-1.500 7c-3-1.500-5-1.500-8 .3z" fill="#ee5a2b" />
          <path d="M19.500 12c3 1.500 5 1.500 8-.3l-1.700 7c-3 1.800-5 1.500-7.800.3z" fill="#86bf3c" />
          <path d="M8.200 20.200c3-1.700 5-1.700 8-.3l-1.600 7c-3-1.500-5-1.500-8 .3z" fill="#3f8ed8" />
          <path d="M17.700 20.500c3 1.500 5 1.500 8-.3l-1.700 7c-3 1.800-5 1.500-8 .3z" fill="#fcc52e" />
        </svg>
      </button>
      <button aria-label="Key" className="ml-6 flex w-9 items-center justify-center">
        <svg viewBox="0 0 32 32" className="size-8">
          <path d="M17 4l7-3 7 6-1 8-8 4-4-2-4 5-1 3-3 1-1 3-3 1-1 2-3-1 1-4L14 13z" fill="#b2babf" stroke="#7f8a90" />
          <path d="M22 5l5 4-2 5-5-4z" fill="#8397ad" />
          <path d="M15 14L4 28" stroke="#e5e9ea" strokeWidth="1.300" />
        </svg>
      </button>
      <div className="ml-[15px] flex gap-0.5">
        {taskIcons.map((task) => (
          <button
            key={task.name}
            aria-label={task.name}
            className={`flex w-[60px] items-center justify-center rounded-[3px] border border-[#3f556e] shadow-[inset_0_0_0_1px_#cfdbe9] ${
              task.active
                ? 'bg-[radial-gradient(circle_at_50%_100%,#7fd5f5,#b5e0f5_60%,#c9dcec)]'
                : 'bg-[linear-gradient(135deg,#c3cfdf,#a5b6cd_50%,#b3c2d6)]'
            }`}
          >
            {task.icon}
          </button>
        ))}
      </div>
      <div className="flex-1" />
      <div className="flex w-4 flex-col items-center justify-between border-x border-[#d7e2ee] bg-[#a3bad4] py-1.5">
        <svg viewBox="0 0 8 4" className="h-1 w-2"><path d="M0 4l4-4 4 4z" fill="#dfe9f4" /></svg>
        <svg viewBox="0 0 8 4" className="h-1 w-2"><path d="M0 0l4 4 4-4z" fill="#dfe9f4" /></svg>
      </div>
      <div className="flex items-center gap-2 bg-[#8090a4] pl-1.5">
        {trayIcons.map((tray) => (
          <button key={tray.name} aria-label={tray.name} className="size-4">
            <svg viewBox="0 0 16 16" className="size-4">{tray.icon}</svg>
          </button>
        ))}
        <time className="w-[69px] text-center font-['Open_Sans',sans-serif] text-[11px] leading-[17px] text-white">
          12:41 AM
          <br />
          1/12/2023
        </time>
      </div>
      <button aria-label="Show desktop" className="w-4 border border-[#46566a] bg-[linear-gradient(#8a99ab,#49596c_45%,#5d6e82)] shadow-[inset_1px_1px_0_#a4b2c2]" />
    </footer>
  );
}

export default function App() {
  return (
    <div className="relative flex h-screen w-full flex-col overflow-hidden bg-white">
      <TabStrip />
      <Omnibar />
      <ReleasePage />
      <Taskbar />
      <WinZipWindow />
      <ExplorerWindow />
      <WinTidyDialog />
    </div>
  );
}
